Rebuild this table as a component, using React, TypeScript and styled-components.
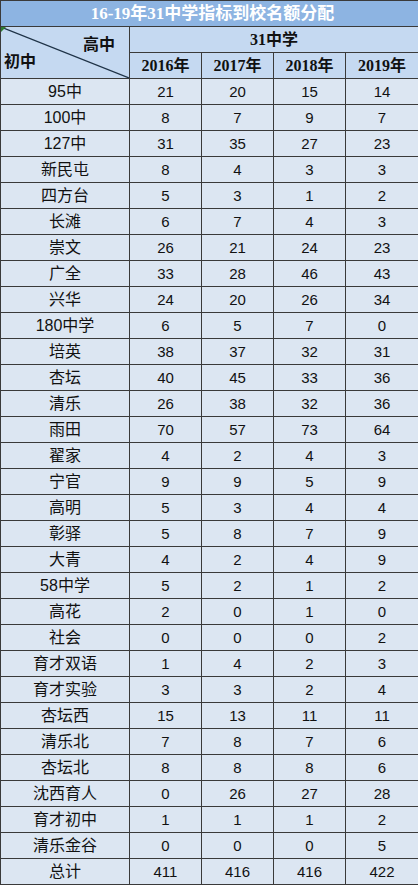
import React from 'react';
import styled, { createGlobalStyle } from 'styled-components';

const GlobalStyle = createGlobalStyle`
  html, body {
    margin: 0;
    padding: 0;
    background: #ffffff;
  }
`;

const rows: [string, number, number, number, number][] = [
  ['95中', 21, 20, 15, 14],
  ['100中', 8, 7, 9, 7],
  ['127中', 31, 35, 27, 23],
  ['新民屯', 8, 4, 3, 3],
  ['四方台', 5, 3, 1, 2],
  ['长滩', 6, 7, 4, 3],
  ['崇文', 26, 21, 24, 23],
  ['广全', 33, 28, 46, 43],
  ['兴华', 24, 20, 26, 34],
  ['180中学', 6, 5, 7, 0],
  ['培英', 38, 37, 32, 31],
  ['杏坛', 40, 45, 33, 36],
  ['清乐', 26, 38, 32, 36],
  ['雨田', 70, 57, 73, 64],
  ['翟家', 4, 2, 4, 3],
  ['宁官', 9, 9, 5, 9],
  ['高明', 5, 3, 4, 4],
  ['彰驿', 5, 8, 7, 9],
  ['大青', 4, 2, 4, 9],
  ['58中学', 5, 2, 1, 2],
  ['高花', 2, 0, 1, 0],
  ['社会', 0, 0, 0, 2],
  ['育才双语', 1, 4, 2, 3],
  ['育才实验', 3, 3, 2, 4],
  ['杏坛西', 15, 13, 11, 11],
  ['清乐北', 7, 8, 7, 6],
  ['杏坛北', 8, 8, 8, 6],
  ['沈西育人', 0, 26, 27, 28],
  ['育才初中', 1, 1, 1, 2],
  ['清乐金谷', 0, 0, 0, 5],
  ['总计', 411, 416, 416, 422],
];

const years = ['2016年', '2017年', '2018年', '2019年'];

const Sheet = styled.table`
  border-collapse: collapse;
  table-layout: fixed;
  width: 418px;
  font-family: 'Liberation Sans', 'Noto Sans CJK SC', sans-serif;
  color: #111111;
`;

const Row = styled.tr`
  height: 26px;
`;

const Title = styled.th`
  background: #8db4e2;
  color: #ffffff;
  font-family: 'Liberation Serif', 'Noto Sans CJK SC', serif;
  font-size: 17px;
  font-weight: bold;
  border: 1px solid #3a3a3a;
  padding: 0 0 0 6px;
  text-align: center;
  line-height: 24px;
`;

const HeadCell = styled.th`
  background: #c5d9f1;
  font-family: 'Liberation Serif', 'Noto Sans CJK SC', serif;
  font-size: 16px;
  font-weight: bold;
  border: 1px solid #3a3a3a;
  padding: 0;
  text-align: center;
  line-height: 24px;
`;

const Corner = styled.th`
  position: relative;
  background: #c5d9f1;
  border: 1px solid #3a3a3a;
  padding: 0;
  font-family: 'Noto Sans CJK SC', sans-serif;
  font-size: 16px;
  font-weight: bold;
`;

const Slash = styled.svg`
  position: absolute;
  inset: 0;
  width: 100%;
  height: 100%;
`;

const Marker = styled.span`
  position: absolute;
  left: 0;
  top: 0;
  width: 0;
  height: 0;
  border-top: 5px solid #2f7d32;
  border-right: 5px solid transparent;
`;

const CornerLabel = styled.span<{ $side: 'top' | 'bottom' }>`
  position: absolute;
  line-height: 1;
  ${({ $side }) =>
    $side === 'top'
      ? 'right: 14px; top: 8px;'
      : 'left: 3px; bottom: 10px;'}
`;

const Cell = styled.td<{ $name?: boolean }>`
  background: #dce6f2;
  border: 1px solid #3a3a3a;
  padding: 0;
  text-align: center;
  font-size: ${({ $name }) => ($name ? '16px' : '15px')};
  line-height: 24px;
`;

export default function App() {
  return (
    <>
      <GlobalStyle />
      <Sheet>
        <colgroup>
          <col style={{ width: 129 }} />
          <col style={{ width: 72 }} />
          <col style={{ width: 72 }} />
          <col style={{ width: 72 }} />
          <col style={{ width: 73 }} />
        </colgroup>
        <thead>
          <Row>
            <Title colSpan={5}>16-19年31中学指标到校名额分配</Title>
          </Row>
          <Row>
            <Corner rowSpan={2}>
              <Slash viewBox="0 0 100 100" preserveAspectRatio="none">
                <line x1="0" y1="0" x2="100" y2="100" stroke="#1f3347" strokeWidth="1.2" vectorEffect="non-scaling-stroke" />
              </Slash>
              <Marker />
              <CornerLabel $side="top">高中</CornerLabel>
              <CornerLabel $side="bottom">初中</CornerLabel>
            </Corner>
            <HeadCell colSpan={4}>31中学</HeadCell>
          </Row>
          <Row>
            {years.map((y) => (
              <HeadCell key={y}>{y}</HeadCell>
            ))}
          </Row>
        </thead>
        <tbody>
          {rows.map(([name, ...vals]) => (
            <Row key={name}>
              <Cell $name>{name}</Cell>
              {vals.map((v, i) => (
                <Cell key={i}>{v}</Cell>
              ))}
            </Row>
          ))}
        </tbody>
      </Sheet>
    </>
  );
}
